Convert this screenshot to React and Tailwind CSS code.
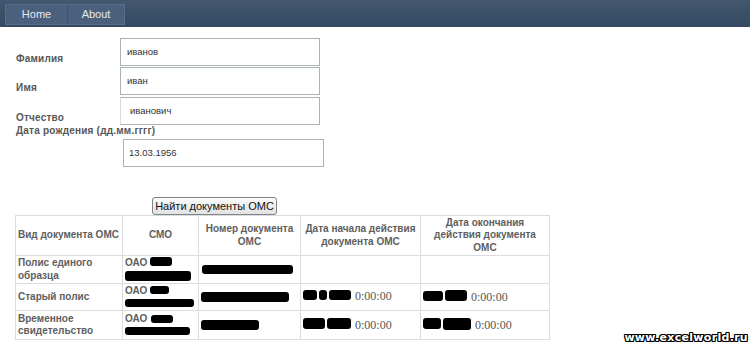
import React from "react";

const Blob = ({ w, h, className = "" }) => (
  <span className={"inline-block bg-black rounded-[3px] align-middle " + className} style={{ width: w, height: h }} />
);

export default function App() {
  const th = "border border-[#dcdcdc] px-[2px] font-bold text-[#5e5e5e] align-middle";
  const td = "border border-[#dcdcdc] px-[2px] font-bold text-[#5e5e5e] align-middle";
  const time = "font-['Liberation_Serif',serif] font-normal text-[12px] text-[#555] tracking-normal";
  return (
    <div className="relative w-[750px] h-[351px] overflow-hidden bg-white font-['Liberation_Sans',sans-serif]">
      <div className="h-[27px] bg-gradient-to-b from-[#43586f] to-[#344862] pt-[4px] pl-[5px]">
        <div className="flex w-[120px] h-[21px] bg-[#4a607c] border border-[#566c88] text-[11px] text-[#e4e9f0]">
          <div className="w-[62px] flex items-center justify-center border-r border-[#3f546e]">Home</div>
          <div className="flex-1 flex items-center justify-center">About</div>
        </div>
      </div>

      <div className="pl-[16px] pt-[11px] flex flex-col text-[10px] text-[#575757]">
        <div className="flex items-end">
          <div className="w-[104px] font-bold leading-[14px] tracking-[0.2px]">Фамилия</div>
          <div className="w-[200px] h-[28px] border border-[#aab4b4] flex items-center pl-[6px] text-[9.5px] text-[#333]">иванов</div>
        </div>
        <div className="flex items-end mt-[1px]">
          <div className="w-[104px] font-bold leading-[14px] tracking-[0.2px]">Имя</div>
          <div className="w-[200px] h-[28px] border border-[#aab4b4] flex items-center pl-[6px] text-[9.5px] text-[#333]">иван</div>
        </div>
        <div className="flex items-end mt-[2px]">
          <div className="w-[104px] font-bold leading-[14px] tracking-[0.2px]">Отчество</div>
          <div className="w-[200px] h-[28px] border border-[#aab4b4] border-l-[#d8dcdc] flex items-center pl-[9px] text-[9.5px] text-[#333]">иванович</div>
        </div>
        <div className="font-bold leading-[12px] tracking-[0.2px]">Дата рождения (дд.мм.гггг)</div>
        <div className="ml-[107px] mt-[2px] w-[201px] h-[28px] border border-[#aab4b4] flex items-center pl-[5px] text-[9.5px] text-[#333]">13.03.1956</div>

        <div className="ml-[136px] mt-[30px] w-[125px] h-[18px] border border-[#7e8588] rounded-[3px] bg-gradient-to-b from-[#fafafa] to-[#e2e2e2] flex items-center justify-center text-[11px] text-[#111]">
          Найти документы ОМС
        </div>

        <table className="-ml-[1px] w-[534px] table-fixed border-collapse border border-[#cfcfcf] text-[10px] leading-[12.5px]">
          <colgroup>
            <col className="w-[107px]" />
            <col className="w-[76px]" />
            <col className="w-[102px]" />
            <col className="w-[120px]" />
            <col className="w-[129px]" />
          </colgroup>
          <tbody>
            <tr className="h-[40px]">
              <td className={th + " text-left whitespace-nowrap"}>Вид документа ОМС</td>
              <td className={th + " text-center"}>СМО</td>
              <td className={th + " text-center whitespace-nowrap"}>Номер документа<br />ОМС</td>
              <td className={th + " text-center whitespace-nowrap"}>Дата начала действия<br />документа ОМС</td>
              <td className={th + " text-center whitespace-nowrap"}>Дата окончания<br />действия документа<br />ОМС</td>
            </tr>
            <tr className="h-[28px]">
              <td className={td}>Полис единого<br />образца</td>
              <td className={td}>
                <div className="flex items-center">ОАО <Blob w={22} h={9} className="ml-[3px] -mt-[3px]" /></div>
                <Blob w={66} h={10} />
              </td>
              <td className={td}><Blob w={91} h={9} className="ml-[1px]" /></td>
              <td className={td}></td>
              <td className={td}></td>
            </tr>
            <tr className="h-[27px]">
              <td className={td}>Старый полис</td>
              <td className={td}>
                <div className="flex items-center">ОАО <Blob w={19} h={8} className="ml-[3px] -mt-[2px]" /></div>
                <Blob w={69} h={8} />
              </td>
              <td className={td}><Blob w={88} h={10} /></td>
              <td className={td}>
                <span className="inline-flex items-center gap-[2px]"><Blob w={14} h={10} /><Blob w={8} h={10} /><Blob w={22} h={10} /></span>
                <span className={time + " ml-[4px]"}>0:00:00</span>
              </td>
              <td className={td}>
                <span className="inline-flex items-center gap-[2px]"><Blob w={20} h={10} /><Blob w={22} h={11} /></span>
                <span className={time + " ml-[4px]"}>0:00:00</span>
              </td>
            </tr>
            <tr className="h-[29px]">
              <td className={td}>Временное<br />свидетельство</td>
              <td className={td}>
                <div className="flex items-center">ОАО <Blob w={22} h={8} className="ml-[4px]" /></div>
                <Blob w={65} h={8} />
              </td>
              <td className={td}><Blob w={58} h={10} /></td>
              <td className={td}>
                <span className="inline-flex items-center gap-[2px]"><Blob w={22} h={11} /><Blob w={24} h={11} /></span>
                <span className={time + " ml-[4px]"}>0:00:00</span>
              </td>
              <td className={td}>
                <span className="inline-flex items-center gap-[2px]"><Blob w={18} h={11} /><Blob w={28} h={12} /></span>
                <span className={time + " ml-[4px]"}>0:00:00</span>
              </td>
            </tr>
          </tbody>
        </table>
      </div>

      <div className="absolute right-[2px] bottom-[5px] text-[11px] font-bold text-white font-['DejaVu_Sans',sans-serif] tracking-[0.3px] [text-shadow:1px_0_0_#000,-1px_0_0_#000,0_1px_0_#000,0_-1px_0_#000,1px_1px_0_#000,-1px_-1px_0_#000,1px_-1px_0_#000,-1px_1px_0_#000]">
        www.excelworld.ru
      </div>
    </div>
  );
}
